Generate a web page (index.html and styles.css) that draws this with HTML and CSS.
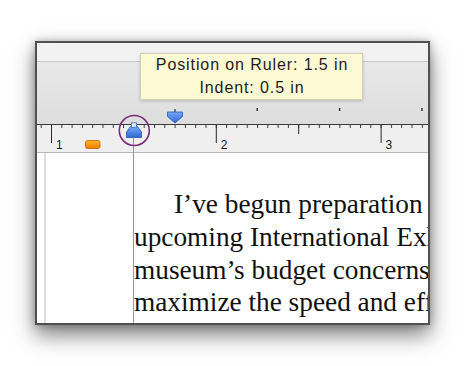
FILE: index.html
```html
<!DOCTYPE html>
<html>
<head>
<meta charset="utf-8">
<link rel="stylesheet" href="styles.css">
</head>
<body>
<div class="window">
  <div class="titlebar"></div>
  <div class="ruler">
    <svg width="391" height="91" viewBox="0 0 391 91">
      <defs>
        <linearGradient id="bar" x1="0" y1="0" x2="0" y2="1">
          <stop offset="0" stop-color="#e8e8e8"/>
          <stop offset="1" stop-color="#dddddd"/>
        </linearGradient>
        <linearGradient id="blue" x1="0" y1="0" x2="0" y2="1">
          <stop offset="0" stop-color="#79a8f7"/>
          <stop offset="1" stop-color="#2d68d6"/>
        </linearGradient>
        <linearGradient id="orange" x1="0" y1="0" x2="0" y2="1">
          <stop offset="0" stop-color="#ffb52a"/>
          <stop offset="1" stop-color="#ee7a00"/>
        </linearGradient>
        <pattern id="ticks" patternUnits="userSpaceOnUse" x="14" y="0" width="10.3" height="91">
          <rect x="0" y="63" width="1" height="3" fill="#3a3a3a"/>
        </pattern>
      </defs>
      <rect x="0" y="0" width="391" height="62" fill="url(#bar)"/>
      <rect x="0" y="62" width="391" height="1" fill="#3a3a3a"/>
      <rect x="0" y="63" width="391" height="27" fill="#efefef"/>
      <rect x="0" y="90" width="391" height="1" fill="#b8b8b8"/>
      <rect x="0" y="63" width="391" height="3" fill="url(#ticks)"/>
      <rect x="14" y="63" width="1" height="18" fill="#2a2a2a"/>
      <rect x="178.8" y="63" width="1" height="18" fill="#2a2a2a"/>
      <rect x="343.6" y="63" width="1" height="18" fill="#2a2a2a"/>
      <rect x="96.4" y="63" width="1" height="9" fill="#2a2a2a"/>
      <rect x="261.2" y="63" width="1" height="9" fill="#2a2a2a"/>
      <text x="19" y="86.5" class="num">1</text>
      <text x="183.8" y="86.5" class="num">2</text>
      <text x="348.6" y="86.5" class="num">3</text>
      <rect x="219.5" y="46" width="1.5" height="3" fill="#333"/>
      <rect x="301.9" y="46" width="1.5" height="3" fill="#333"/>
      <rect x="384.2" y="46" width="1.5" height="3" fill="#333"/>
      <rect x="48.5" y="78.5" width="14.5" height="8" rx="2" fill="url(#orange)" stroke="#c86400" stroke-width="0.8"/>
      <rect x="137.3" y="47" width="1.4" height="3.5" fill="#3b4a73"/>
      <path d="M130.5,50 H145.5 V54.5 L138,61 L130.5,54.5 Z" fill="url(#blue)" stroke="#2457b8" stroke-width="0.8"/>
      <path d="M93.5,64.5 H100.5 L104.5,70 V75.5 H89.5 V70 Z" fill="url(#blue)" stroke="#2457b8" stroke-width="0.8"/>
      <rect x="94.5" y="60.8" width="5" height="4.5" fill="#dfeaff" stroke="#3a6fd0" stroke-width="0.8"/>
      <rect x="96" y="75.5" width="1" height="15.5" fill="#999"/>
      <circle cx="97.3" cy="68.5" r="15" fill="none" stroke="#7d2c7b" stroke-width="1.6"/>
    </svg>
  </div>
  <div class="page">
    <div class="margin-guide"></div>
    <div class="text">
      <p class="line first">I’ve begun preparation</p>
      <p class="line">upcoming International Exh</p>
      <p class="line">museum’s budget concerns</p>
      <p class="line">maximize the speed and eff</p>
    </div>
  </div>
  <div class="tooltip">Position on Ruler: 1.5 in<br>Indent: 0.5 in</div>
</div>
</body>
</html>
```
FILE: styles.css
```css
html, body {
  margin: 0;
  padding: 0;
  background: #ffffff;
}
body {
  width: 465px;
  height: 366px;
  overflow: hidden;
  padding: 41px 0 0 35px;
  box-sizing: border-box;
}
.window {
  position: relative;
  width: 395px;
  height: 284px;
  box-sizing: border-box;
  border: 2px solid #505050;
  background: #ffffff;
  overflow: hidden;
  box-shadow: 0 10px 20px rgba(0, 0, 0, 0.5), 0 0 8px rgba(0, 0, 0, 0.25);
  display: flex;
  flex-direction: column;
}
.titlebar {
  height: 18px;
  background: #f2f2f2;
  border-bottom: 1px solid #c8c8c8;
  flex: none;
}
.ruler {
  height: 91px;
  flex: none;
  line-height: 0;
}
.ruler svg {
  display: block;
}
.num {
  font-family: "Liberation Sans", Arial, sans-serif;
  font-size: 12px;
  fill: #1a1a1a;
}
.page {
  flex: 1;
  display: flex;
  min-height: 0;
}
.margin-guide {
  width: 2px;
  margin-left: 7px;
  background: #dedede;
  flex: none;
}
.text {
  margin-left: 87px;
  border-left: 1px solid #999999;
  flex: 1;
  min-width: 0;
  overflow: hidden;
  padding-top: 35px;
}
.line {
  margin: 0;
  white-space: nowrap;
  font-family: "Liberation Serif", "Times New Roman", serif;
  font-size: 27.3px;
  line-height: 32.8px;
  color: #111111;
}
.line.first {
  padding-left: 40px;
}
.tooltip {
  position: absolute;
  left: 103px;
  top: 10px;
  width: 223px;
  height: 47px;
  box-sizing: border-box;
  padding-left: 1px;
  background: #fdf9d2;
  border: 1px solid #d2d0bf;
  box-shadow: 0 1px 3px rgba(0, 0, 0, 0.2);
  text-align: center;
  font-family: "Liberation Sans", Arial, sans-serif;
  font-size: 16px;
  letter-spacing: 0.9px;
  line-height: 22.5px;
  color: #1e1e1e;
}
```
